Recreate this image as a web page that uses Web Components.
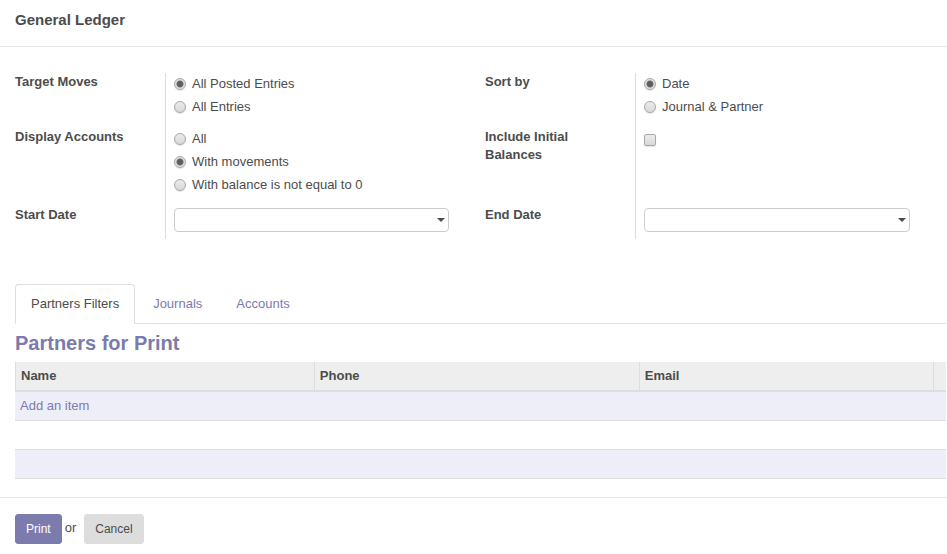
<!DOCTYPE html>
<html lang="en">
<head>
<meta charset="utf-8">
<title>General Ledger</title>
<style>
  body {
    margin: 0;
    background: #fff;
    color: #4c4c4c;
    font: 13px/18px "Liberation Sans", Arial, sans-serif;
    --accent: #7c7bad;
    --line: #ddd;
  }
</style>
</head>
<body>
<ledger-dialog heading="General Ledger">
  <field-grid>
    <radio-field label="Target Moves" options="All Posted Entries|All Entries" selected="0"></radio-field>
    <radio-field label="Sort by" options="Date|Journal &amp; Partner" selected="0"></radio-field>
    <radio-field label="Display Accounts" options="All|With movements|With balance is not equal to 0" selected="1"></radio-field>
    <check-field label="Include Initial Balances"></check-field>
    <date-field label="Start Date"></date-field>
    <date-field label="End Date"></date-field>
  </field-grid>
  <tab-strip tabs="Partners Filters|Journals|Accounts"></tab-strip>
  <partner-list heading="Partners for Print"></partner-list>
  <dialog-actions slot="footer"></dialog-actions>
</ledger-dialog>

<script>
const fieldStyle = `
  :host { display: grid; grid-template-columns: 150px minmax(0, 1fr); }
  .name { font-weight: bold; padding-right: 8px; }
  .value { border-left: 1px solid var(--line); padding: 0 0 9px 8px; }
  input[type=radio], input[type=checkbox] {
    appearance: none; box-sizing: border-box; flex: none;
    width: 12px; height: 12px; margin: 0;
    border: 1px solid #a8a8a8;
    background: linear-gradient(#ececec, #d8d8d8);
    box-shadow: 0 1px 1px #e4e4e4;
  }
  input[type=radio] { border-radius: 50%; }
  input[type=checkbox] { display: block; border-radius: 2px; margin-top: 6px; }
  input[type=radio]:checked { background: radial-gradient(circle, #5e5e5e 0 2px, #6a6a6a 3px, #e2e2e2 4px); }
`;

class LedgerDialog extends HTMLElement {
  connectedCallback() {
    const root = this.attachShadow({ mode: 'open' });
    root.innerHTML = `
      <style>
        :host { display: block; }
        header { padding: 10px 15px 16px; border-bottom: 1px solid #e5e5e5; }
        h1 { margin: 0; font-size: 15px; line-height: 20px; }
        main { padding: 26px 1px 18px 15px; }
        footer { padding: 16px 15px 10px; border-top: 1px solid #e5e5e5; }
      </style>
      <header><h1></h1></header>
      <main><slot></slot></main>
      <footer><slot name="footer"></slot></footer>`;
    root.querySelector('h1').textContent = this.getAttribute('heading');
  }
}

class FieldGrid extends HTMLElement {
  connectedCallback() {
    this.attachShadow({ mode: 'open' }).innerHTML = `
      <style>
        :host {
          display: grid; column-gap: 36px;
          grid-template-columns: minmax(0, 434fr) minmax(0, 425fr);
          padding-right: 36px; margin-bottom: 45px;
        }
      </style>
      <slot></slot>`;
  }
}

class RadioField extends HTMLElement {
  connectedCallback() {
    const root = this.attachShadow({ mode: 'open' });
    root.innerHTML = `
      <style>${fieldStyle}
        .option { display: flex; align-items: center; gap: 6px; height: 22px; margin-bottom: 1px; }
      </style>
      <div class="name" id="name"></div>
      <div class="value" role="radiogroup" aria-labelledby="name"></div>`;
    root.querySelector('.name').textContent = this.getAttribute('label');
    const group = root.querySelector('.value');
    this.getAttribute('options').split('|').forEach((text, i) => {
      const label = document.createElement('label');
      label.className = 'option';
      const input = document.createElement('input');
      input.type = 'radio';
      input.name = 'choice';
      input.checked = i === Number(this.getAttribute('selected'));
      label.append(input, text);
      group.append(label);
    });
  }
}

class CheckField extends HTMLElement {
  connectedCallback() {
    const root = this.attachShadow({ mode: 'open' });
    root.innerHTML = `
      <style>${fieldStyle}</style>
      <label class="name" for="box"></label>
      <div class="value"><input type="checkbox" id="box"></div>`;
    root.querySelector('label').textContent = this.getAttribute('label');
  }
}

class DateField extends HTMLElement {
  connectedCallback() {
    const root = this.attachShadow({ mode: 'open' });
    root.innerHTML = `
      <style>${fieldStyle}
        .value { padding: 2px 0 7px 8px; }
        .box {
          display: flex; align-items: center; box-sizing: border-box; height: 24px;
          border: 1px solid #ccc; border-radius: 4px;
        }
        .box input { flex: 1; min-width: 0; border: 0; padding: 0 5px; background: none; font: inherit; color: inherit; outline: 0; }
        button { display: flex; border: 0; background: none; padding: 4px 3px; color: inherit; }
      </style>
      <label class="name" for="date"></label>
      <div class="value"><div class="box">
        <input type="text" id="date">
        <button type="button" aria-label="Open calendar"><svg width="8" height="4" viewBox="0 0 8 4" aria-hidden="true"><path d="M0 0h8L4 4z" fill="currentColor"/></svg></button>
      </div></div>`;
    root.querySelector('label').textContent = this.getAttribute('label');
  }
}

class TabStrip extends HTMLElement {
  connectedCallback() {
    const root = this.attachShadow({ mode: 'open' });
    root.innerHTML = `
      <style>
        :host { display: block; }
        nav { display: flex; gap: 2px; border-bottom: 1px solid var(--line); }
        a {
          padding: 10px 15px; margin-bottom: -1px; line-height: 18px; text-decoration: none;
          color: var(--accent); border: 1px solid transparent; border-radius: 4px 4px 0 0;
        }
        a[aria-current] { color: #4c4c4c; background: #fff; border-color: var(--line) var(--line) #fff; }
      </style>
      <nav></nav>`;
    this.getAttribute('tabs').split('|').forEach((text, i) => {
      const a = document.createElement('a');
      a.href = '#';
      a.textContent = text;
      if (i === 0) a.setAttribute('aria-current', 'page');
      root.querySelector('nav').append(a);
    });
  }
}

class PartnerList extends HTMLElement {
  connectedCallback() {
    const root = this.attachShadow({ mode: 'open' });
    root.innerHTML = `
      <style>
        :host { display: block; }
        h2 { margin: 8px 0; font-size: 20px; line-height: 22px; color: var(--accent); }
        table { width: 100%; table-layout: fixed; border-collapse: separate; border-spacing: 0; }
        .name { width: 32.1%; } .phone { width: 34.9%; } .email { width: 31.6%; }
        th, td { box-sizing: border-box; text-align: left; padding: 0 5px; line-height: 18px; }
        th { height: 30px; padding-bottom: 1px; background: #eee; border-left: 1px solid var(--line); border-bottom: 2px solid var(--line); }
        td { height: 29px; border-bottom: 1px solid var(--line); }
        tbody tr:nth-child(odd) { background: #eeeef8; }
        a { color: var(--accent); text-decoration: none; }
      </style>
      <h2></h2>
      <table>
        <colgroup><col class="name"><col class="phone"><col class="email"><col></colgroup>
        <thead><tr><th>Name</th><th>Phone</th><th>Email</th><th></th></tr></thead>
        <tbody>
          <tr><td colspan="4"><a href="#">Add an item</a></td></tr>
          <tr><td colspan="4"></td></tr>
          <tr><td colspan="4"></td></tr>
        </tbody>
      </table>`;
    root.querySelector('h2').textContent = this.getAttribute('heading');
  }
}

class DialogActions extends HTMLElement {
  connectedCallback() {
    this.attachShadow({ mode: 'open' }).innerHTML = `
      <style>
        :host { display: flex; }
        button {
          font: 12px/18px "Liberation Sans", Arial, sans-serif; padding: 5px 10px;
          border: 1px solid var(--line); border-radius: 3px; background: var(--line); color: #4c4c4c;
        }
        .primary { background: var(--accent); border-color: var(--accent); color: #fff; }
        span { padding: 5px 8px 7px 3px; }
      </style>
      <button type="button" class="primary">Print</button><span>or</span><button type="button">Cancel</button>`;
  }
}

customElements.define('ledger-dialog', LedgerDialog);
customElements.define('field-grid', FieldGrid);
customElements.define('radio-field', RadioField);
customElements.define('check-field', CheckField);
customElements.define('date-field', DateField);
customElements.define('tab-strip', TabStrip);
customElements.define('partner-list', PartnerList);
customElements.define('dialog-actions', DialogActions);
</script>
</body>
</html>
